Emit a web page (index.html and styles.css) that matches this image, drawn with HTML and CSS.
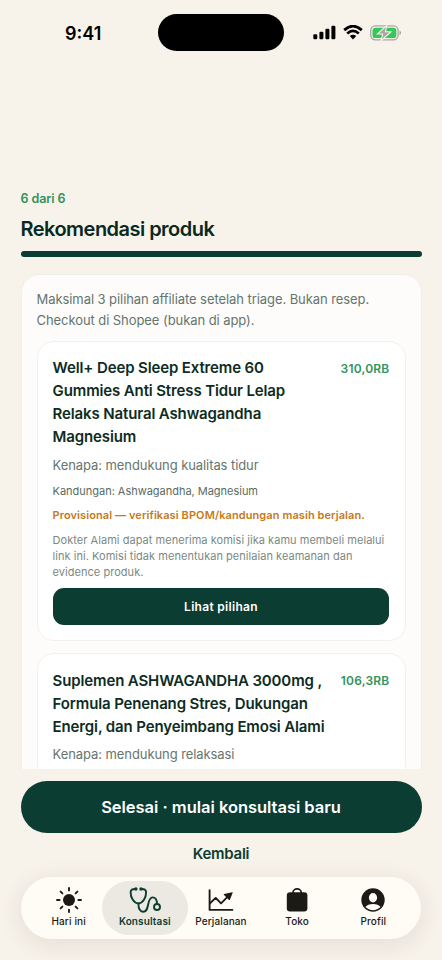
FILE: index.html
```html
<!DOCTYPE html>
<html lang="id">
<head>
<meta charset="utf-8">
<meta name="viewport" content="width=device-width, initial-scale=1">
<title>Rekomendasi produk</title>
<link rel="stylesheet" href="styles.css">
</head>
<body>
<div class="screen">
  <div class="status">
    <span class="time">9:41</span>
    <span class="island"></span>
    <div class="indicators">
      <svg width="23" height="15" viewBox="0 0 23 15"><rect x="0.3" y="9.2" width="4" height="5" rx="1.2"/><rect x="6.4" y="6.8" width="4" height="7.4" rx="1.2"/><rect x="12.4" y="3.8" width="4" height="10.4" rx="1.2"/><rect x="18.4" y="0.8" width="4" height="13.4" rx="1.2"/></svg>
      <svg width="20" height="15" viewBox="0 0 20 15"><path d="M1.2 5.1Q10-2.8 18.8 5.1" fill="none" stroke="#000" stroke-width="2.8"/><path d="M4.2 8.5Q10 3.3 15.8 8.5" fill="none" stroke="#000" stroke-width="2.7"/><path d="M6.8 11Q10 8.4 13.2 11L10 14.4Z"/></svg>
      <svg width="32" height="16" viewBox="0 0 32 16"><rect x="0.7" y="0.9" width="27.4" height="14" rx="4.6" fill="none" stroke="#aaa7a2" stroke-width="1.3"/><rect x="2.5" y="2.7" width="23.8" height="10.4" rx="2.9" fill="#34c759"/><path d="M29.5 5.6v4.7c2.1-.8 2.1-3.9 0-4.7Z" fill="#aaa7a2"/><path d="M16.8.4 7.4 9h5.2l-1.5 6.7 9.9-9h-5.5Z" fill="#aaa7a2" stroke="#f7f2ea" stroke-width="1.1"/></svg>
    </div>
  </div>

  <header class="heading">
    <div class="step">6 dari 6</div>
    <h1>Rekomendasi produk</h1>
    <div class="progress"></div>
  </header>

  <main class="scroll">
    <section class="panel">
      <p class="intro">Maksimal 3 pilihan affiliate setelah triage. Bukan resep.<br>Checkout di Shopee (bukan di app).</p>
      <article class="product">
        <div class="top">
          <h2>Well+ Deep Sleep Extreme 60<br>Gummies Anti Stress Tidur Lelap<br>Relaks Natural Ashwagandha<br>Magnesium</h2>
          <span class="price">310,0RB</span>
        </div>
        <p class="reason">Kenapa: mendukung kualitas tidur</p>
        <p class="contents">Kandungan: Ashwagandha, Magnesium</p>
        <p class="warning">Provisional — verifikasi BPOM/kandungan masih berjalan.</p>
        <p class="disclosure">Dokter Alami dapat menerima komisi jika kamu membeli melalui<br>link ini. Komisi tidak menentukan penilaian keamanan dan<br>evidence produk.</p>
        <button class="view">Lihat pilihan</button>
      </article>
      <article class="product">
        <div class="top">
          <h2>Suplemen ASHWAGANDHA 3000mg ,<br>Formula Penenang Stres, Dukungan<br>Energi, dan Penyeimbang Emosi Alami</h2>
          <span class="price">106,3RB</span>
        </div>
        <p class="reason">Kenapa: mendukung relaksasi</p>
      </article>
    </section>
  </main>

  <div class="actions">
    <button class="primary">Selesai · mulai konsultasi baru</button>
    <button class="back">Kembali</button>
  </div>

  <nav class="tabs">
    <a class="tab"><svg width="28" height="28" viewBox="0 0 28 28"><circle cx="14" cy="14" r="6"/><path d="M14 2v2.4M14 23.6V26M2 14h2.6M23.4 14H26M5.6 5.6l1.8 1.8M20.6 20.6l1.8 1.8M22.4 5.6l-1.8 1.8M7.4 20.6l-1.8 1.8" fill="none" stroke="currentColor" stroke-width="1.9" stroke-linecap="round"/></svg><span>Hari ini</span></a>
    <a class="tab active"><svg width="32" height="28" viewBox="0 0 32 28"><g fill="none" stroke="currentColor" stroke-width="1.9" stroke-linecap="round" stroke-linejoin="round"><path d="M6.5 3C3.5 2.8 1.6 3.7 1.6 6.2c0 5.3 3.3 11.3 7.8 11.3s7.7-6 7.7-11.3c0-2.5-1.9-3.4-4.8-3.2"/><path d="M9.4 17.5c0 5.3 2 8.3 5.2 8.3 6.1 0 3-14.4 9-14.4 3.2 0 4.4 2.8 4.4 6.6"/><circle cx="28" cy="21" r="3"/></g><circle cx="6.9" cy="3" r="1.7"/><circle cx="12" cy="3" r="1.7"/></svg><span>Konsultasi</span></a>
    <a class="tab"><svg width="28" height="28" viewBox="0 0 28 28"><g fill="none" stroke="currentColor" stroke-width="1.9" stroke-linecap="round" stroke-linejoin="round"><path d="M2.6 4.3v19.6h22.8"/><path d="M3 17.2l5.7-5.3 5.3 5.5 8-8"/></g><path d="M25.2 6.2 17.1 8c-.5.1-.6.5-.3.8l5.2 5.1c.4.4.8.2.9-.2l2.8-6.9c.2-.4-.1-.7-.5-.6Z"/></svg><span>Perjalanan</span></a>
    <a class="tab"><svg width="28" height="28" viewBox="0 0 28 28"><rect x="3.8" y="6.2" width="20.6" height="19.2" rx="3.2"/><path d="M9.9 7.5V7a4.2 4.1 0 0 1 8.4 0v.5" fill="none" stroke="currentColor" stroke-width="1.7"/></svg><span>Toko</span></a>
    <a class="tab"><svg width="28" height="28" viewBox="0 0 28 28"><circle cx="14" cy="14" r="11.7"/><ellipse class="cut" cx="14" cy="11.7" rx="4.1" ry="4.7"/><path class="cut" d="M6.4 21.1c1.5-2 4.2-3.1 7.6-3.1s6.1 1.1 7.6 3.1c-4.2 4.1-11 4.1-15.2 0Z"/></svg><span>Profil</span></a>
  </nav>
</div>
</body>
</html>
```

FILE: styles.css
```css
* { box-sizing: border-box; margin: 0; padding: 0; }
body { background: #f7f2ea; font-family: Inter, "Liberation Sans", sans-serif; }
button { border: 0; font-family: inherit; display: block; width: 100%; }
svg { display: block; fill: currentColor; flex: none; }

.screen { width: 442px; height: 960px; overflow: hidden; background: #f7f2ea; display: flex; flex-direction: column; padding: 0 20.5px; white-space: nowrap; }

.status { height: 65px; flex: none; display: grid; grid-template-columns: 137.5px 126px 1fr; align-items: center; color: #000; }
.time { padding: 1px 0 0 44.5px; font-size: 18px; font-weight: 600; letter-spacing: 0; }
.island { height: 37px; border-radius: 19px; background: #000; }
.indicators { display: flex; align-items: center; gap: 7px; padding-left: 29px; }

.heading { flex: none; padding-top: 124.5px; }
.step { font-size: 12.5px; line-height: 18px; font-weight: 600; color: #32935c; letter-spacing: -0.1px; }
h1 { margin-top: 8.5px; font-size: 20px; line-height: 26px; font-weight: 600; letter-spacing: -0.53px; color: #08291f; }
.progress { margin-top: 8.5px; height: 6.5px; border-radius: 4px; background: #0c3d33; }

.scroll { flex: none; height: 511.5px; padding-top: 16.5px; overflow: hidden; }
.panel { height: 700px; padding: 14.5px 15px; border: 1px solid #f0eee8; border-radius: 18px; background: #fdfcfa; }
.intro { font-size: 13px; line-height: 21.3px; color: #64756f; letter-spacing: -0.07px; }
.product { margin-top: 9.4px; padding: 14.4px 15.1px 15.1px; border: 1px solid #f0f1ef; border-radius: 17px; background: #fff; }
.product + .product { margin-top: 12px; }
.top { display: flex; justify-content: space-between; }
h2 { font-size: 15px; line-height: 23px; font-weight: 600; letter-spacing: -0.13px; color: #0d2c23; }
.price { padding-top: 2.5px; font-size: 12px; line-height: 20px; font-weight: 600; letter-spacing: 0.2px; color: #32935c; }
.reason { margin-top: 6.5px; font-size: 13px; line-height: 21px; letter-spacing: -0.08px; color: #66766f; }
.contents { margin-top: 7px; font-size: 11px; line-height: 17px; letter-spacing: -0.02px; color: #596b64; }
.warning { margin-top: 7px; font-size: 11px; line-height: 17px; font-weight: 600; letter-spacing: 0.09px; color: #c67a18; }
.disclosure { margin-top: 8px; font-size: 11px; line-height: 16px; letter-spacing: 0.04px; color: #7b8984; }
.view { margin-top: 8px; height: 37.5px; border-radius: 11px; background: #0c3d33; color: #fff; font-size: 12px; font-weight: 600; letter-spacing: 0.3px; }

.actions { flex: none; padding-top: 12px; }
.primary { height: 52.5px; border-radius: 27px; background: #0c3d33; color: #fff; font-size: 16.5px; font-weight: 600; letter-spacing: -0.03px; }
.back { height: 43.5px; padding-bottom: 3px; background: none; color: #0c3d33; font-size: 15px; font-weight: 600; letter-spacing: -0.28px; }

.tabs { flex: none; height: 62px; margin: 0 0.6px; padding: 4px 9.5px; display: grid; grid-template-columns: repeat(5, 1fr); border-radius: 31px; background: #fffcf5; box-shadow: 0 5px 24px rgba(70, 60, 40, 0.11); color: #1c1a14; }
.tab { display: flex; flex-direction: column; align-items: center; gap: 1px; padding-top: 5.5px; font-size: 10px; line-height: 13px; font-weight: 500; letter-spacing: 0.12px; }
.tab.active { color: #0c3d33; font-weight: 600; background: #ece9e2; border-radius: 27px; margin: 0 -5px; }
.cut { fill: #fffcf5; }
```
